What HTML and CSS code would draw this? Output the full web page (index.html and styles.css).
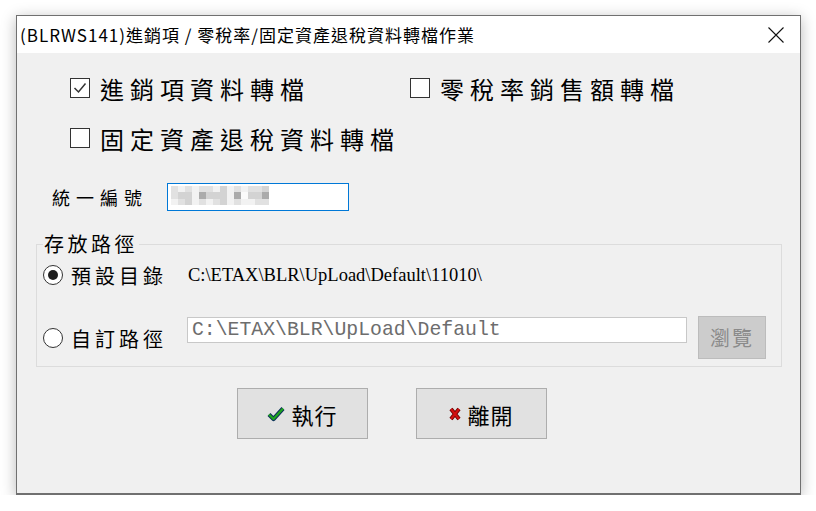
FILE: index.html
```html
<!DOCTYPE html>
<html lang="zh-Hant">
<head>
<meta charset="utf-8">
<title>BLRWS141</title>
<link rel="stylesheet" href="styles.css">
</head>
<body>
<div class="window">
  <div class="titlebar">
    <span class="title">(BLRWS141)進銷項 / 零稅率/固定資產退稅資料轉檔作業</span>
    <svg class="close" width="16" height="16" viewBox="0 0 16 16"><path d="M0.5 0.5 L15.5 15.5 M15.5 0.5 L0.5 15.5" stroke="#111" stroke-width="1.1" fill="none"/></svg>
  </div>
  <div class="content">
    <div class="checks">
      <div class="chk"><span class="box"><svg width="18" height="18" viewBox="0 0 18 18"><polyline points="3.5,9 7.5,13 14.5,4.5" fill="none" stroke="#333" stroke-width="1.5"/></svg></span><span>進銷項資料轉檔</span></div>
      <div class="chk"><span class="box"></span><span>零稅率銷售額轉檔</span></div>
      <div class="chk"><span class="box"></span><span>固定資產退稅資料轉檔</span></div>
    </div>
    <div class="ban-row">
      <span class="ban-label">統一編號</span>
      <div class="ban-input">
        <div class="mosaic">
          <i class="b"></i><i class="a"></i><i class="b"></i><i class="a"></i><i class="b"></i><i class="b"></i><i class="a"></i><i class="c"></i><i class="a"></i><i class="b"></i><i class="a"></i><i class="b"></i><i class="b"></i><i class="c"></i>
          <i class="b"></i><i class="c"></i><i class="c"></i><i class="a"></i><i class="d"></i><i class="c"></i><i class="c"></i><i class="c"></i><i class="a"></i><i class="d"></i><i class="w"></i><i class="c"></i><i class="c"></i><i class="d"></i>
          <i class="a"></i><i class="b"></i><i class="c"></i><i class="a"></i><i class="b"></i><i class="a"></i><i class="b"></i><i class="c"></i><i class="a"></i><i class="b"></i><i class="a"></i><i class="a"></i><i class="b"></i><i class="b"></i>
        </div>
      </div>
    </div>
    <fieldset class="group">
      <legend>存放路徑</legend>
      <div class="row1">
        <div class="radio"><span class="dot on"></span><span>預設目錄</span></div>
        <div class="path-text">C:\ETAX\BLR\UpLoad\Default\11010\</div>
      </div>
      <div class="row2">
        <div class="radio r2"><span class="dot"></span><span>自訂路徑</span></div>
        <div class="path-input">C:\ETAX\BLR\UpLoad\Default</div>
        <div class="browse">瀏覽</div>
      </div>
    </fieldset>
    <div class="actions">
      <div class="btn">
        <svg width="18" height="16" viewBox="0 0 18 16"><polyline points="2,8.5 6.5,13 16,2.5" fill="none" stroke="#0b2f5a" stroke-width="4.2" stroke-linejoin="round"/><polyline points="2,8.5 6.5,13 16,2.5" fill="none" stroke="#1ea51e" stroke-width="2.2" stroke-linejoin="round"/></svg>
        <span>執行</span>
      </div>
      <div class="btn">
        <svg width="12" height="14" viewBox="0 0 12 14"><path d="M2 2 L10 12 M10 2 L2 12" stroke="#6b0000" stroke-width="4" fill="none"/><path d="M2 2 L10 12 M10 2 L2 12" stroke="#d21010" stroke-width="2.2" fill="none"/></svg>
        <span>離開</span>
      </div>
    </div>
  </div>
</div>
</body>
</html>
```

FILE: styles.css
```css
body {
  margin: 0;
  background: #ffffff;
  font-family: "Noto Sans CJK TC", "Noto Sans", sans-serif;
  color: #000;
}

.window {
  box-sizing: border-box;
  width: 785px;
  height: 480px;
  margin: 15px 0 0 16px;
  border: 1px solid #707070;
  border-bottom-width: 2px;
  background: #f0f0f0;
  box-shadow: 0 3px 14px rgba(0, 0, 0, 0.28);
  display: flex;
  flex-direction: column;
}

.titlebar {
  height: 37px;
  flex: none;
  background: #ffffff;
  display: flex;
  align-items: center;
  justify-content: space-between;
  padding: 0 16px 0 3px;
}

.title {
  font-size: 17px;
  letter-spacing: 1px;
  white-space: nowrap;
}

.close {
  display: block;
}

.content {
  flex: 1;
  padding: 20px 18px 0 0;
}

.checks {
  display: grid;
  grid-template-columns: 340px auto;
  row-gap: 20px;
  padding-left: 53px;
}

.chk {
  display: flex;
  align-items: center;
  gap: 10px;
  height: 30px;
  font-size: 24px;
  letter-spacing: 6px;
  white-space: nowrap;
}

.box {
  width: 20px;
  height: 20px;
  box-sizing: border-box;
  border: 1px solid #333;
  background: #fff;
  display: flex;
  align-items: center;
  justify-content: center;
  flex: none;
}

.ban-row {
  display: flex;
  align-items: center;
  height: 28px;
  margin: 30px 0 0 35px;
}

.ban-label {
  width: 115px;
  font-size: 18px;
  letter-spacing: 6px;
}

.ban-input {
  box-sizing: border-box;
  width: 182px;
  height: 28px;
  border: 1px solid #0078d7;
  background: #fff;
  padding: 2px 0 0 3px;
}

.mosaic {
  display: grid;
  grid-template-columns: repeat(14, 7px);
  grid-auto-rows: 6.4px;
}

.mosaic i { display: block; }
.mosaic .a { background: #f2f2f2; }
.mosaic .w { background: #fbfbfb; }
.mosaic .b { background: #e1e1e1; }
.mosaic .c { background: #d3d3d3; }
.mosaic .d { background: #ababab; }

.group {
  margin: 21px 0 0 19px;
  border: 1px solid #dcdcdc;
  padding: 6px 14px 7px 6px;
  min-width: 0;
}

.group legend {
  padding: 0 1px;
  margin: 0;
  font-size: 20px;
  line-height: 24px;
  letter-spacing: 3.5px;
}

.row1 {
  display: flex;
  align-items: center;
  height: 26px;
}

.row2 {
  display: flex;
  align-items: flex-start;
  margin-top: 28px;
}

.radio {
  display: flex;
  align-items: center;
  gap: 8px;
  width: 145px;
  height: 26px;
  font-size: 20px;
  letter-spacing: 4px;
  flex: none;
}

.radio.r2 {
  width: 144px;
  margin-top: 9px;
}

.dot {
  width: 20px;
  height: 20px;
  box-sizing: border-box;
  border: 1px solid #333;
  border-radius: 50%;
  background: #fff;
  display: flex;
  align-items: center;
  justify-content: center;
  flex: none;
}

.dot.on::after {
  content: "";
  width: 10px;
  height: 10px;
  border-radius: 50%;
  background: #1e1e1e;
}

.path-text {
  font-family: "Liberation Serif", serif;
  font-size: 18.5px;
  white-space: nowrap;
}

.path-input {
  box-sizing: border-box;
  width: 500px;
  height: 26px;
  margin-top: 1px;
  border: 1px solid #c8c8c8;
  background: #fff;
  padding-left: 4px;
  font-family: "Liberation Mono", monospace;
  font-size: 19.8px;
  line-height: 24px;
  color: #6d6d6d;
  white-space: nowrap;
  overflow: hidden;
}

.browse {
  box-sizing: border-box;
  width: 68px;
  height: 43px;
  margin-left: 11px;
  background: #cccccc;
  border: 1px solid #bcbcbc;
  color: #8a8a8a;
  font-size: 20px;
  letter-spacing: 2px;
  display: flex;
  align-items: center;
  justify-content: center;
}

.actions {
  display: flex;
  gap: 48px;
  margin: 21px 0 0 220px;
}

.btn {
  box-sizing: border-box;
  width: 131px;
  height: 51px;
  border: 1px solid #adadad;
  background: #e1e1e1;
  display: flex;
  align-items: center;
  justify-content: center;
  gap: 6px;
  font-size: 22px;
  letter-spacing: 1px;
}

.btn svg { display: block; flex: none; }
```
